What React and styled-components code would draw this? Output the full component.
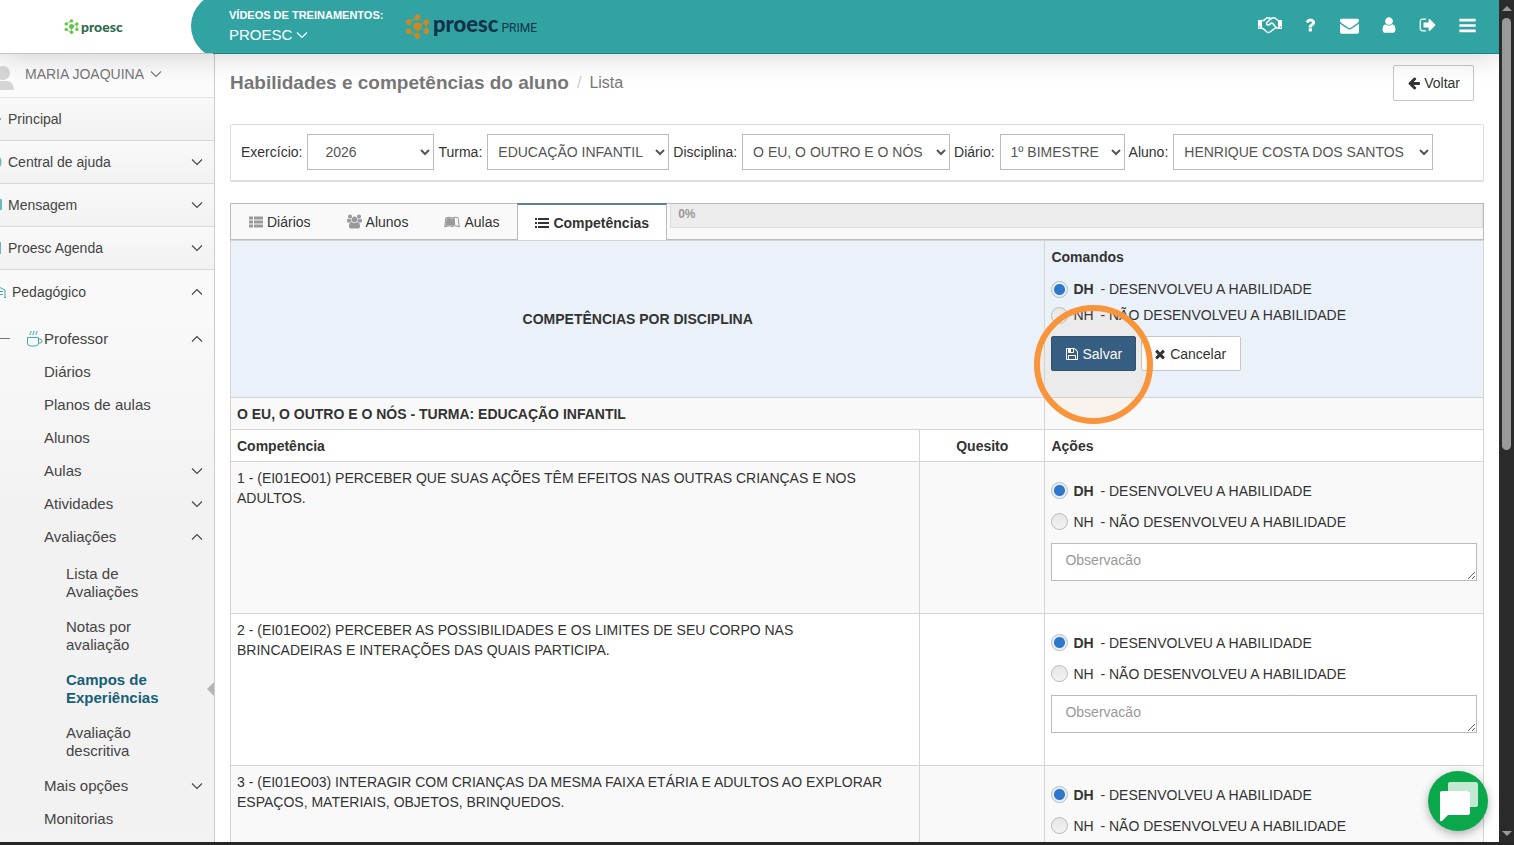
import { useState } from "react";
import styled, { createGlobalStyle } from "styled-components";
import { FaLeanpub } from "react-icons/fa";

const GlobalStyle = createGlobalStyle`
  * {
    box-sizing: border-box;
  }

  body {
    margin: 0;
    overflow: hidden;
    font-family: "Liberation Sans", Arial, sans-serif;
    font-size: 14px;
    line-height: 20px;
    color: #333;
    background: #fff;
  }

  button, select, textarea {
    font-family: inherit;
    font-size: 14px;
  }
`;

const paths = {
  arrowLeft:
    "M1664 896v128q0 53-32.5 90.5t-84.5 37.5h-704l293 294q38 36 38 90t-38 90l-75 76q-37 37-90 37-52 0-91-37l-651-652q-37-37-37-90 0-52 37-91l651-650q38-38 91-38 52 0 90 38l75 74q38 38 38 91t-38 91l-293 293h704q52 0 84.5 37.5t32.5 90.5z",
  times:
    "M1490 1322q0 40-28 68l-136 136q-28 28-68 28t-68-28l-294-294-294 294q-28 28-68 28t-68-28l-136-136q-28-28-28-68t28-68l294-294-294-294q-28-28-28-68t28-68l136-136q28-28 68-28t68 28l294 294 294-294q28-28 68-28t68 28l136 136q28 28 28 68t-28 68l-294 294 294 294q28 28 28 68z",
  envelope:
    "M1792 710v794q0 66-47 113t-113 47h-1472q-66 0-113-47t-47-113v-794q44 49 101 87 362 246 497 345 57 42 92.5 65.5t94.5 48 110 24.5h2q51 0 110-24.5t94.5-48 92.5-65.5q170-123 498-345 57-39 100-87zm0-294q0 79-49 151t-122 123q-376 261-468 325-10 7-42.5 31t-54 38.5-52 32.5-57.5 27-50 9h-2q-23 0-50-9t-57.5-27-52-32.5-54-38.5-42.5-31q-91-64-262-182.5t-205-142.5q-62-42-117-115.5t-55-136.5q0-78 41.5-130t118.5-52h1472q65 0 112.5 47t47.5 113z",
  save: "M512 1536h768v-384h-768v384zm896 0h128v-896q0-14-10-38.5t-20-34.5l-281-281q-10-10-34-20t-39-10v416q0 40-28 68t-68 28h-576q-40 0-68-28t-28-68v-416h-128v1280h128v-416q0-40 28-68t68-28h832q40 0 68 28t28 68v416zm-384-928v-320q0-13-9.5-22.5t-22.5-9.5h-192q-13 0-22.5 9.5t-9.5 22.5v320q0 13 9.5 22.5t22.5 9.5h192q13 0 22.5-9.5t9.5-22.5zm640 32v928q0 40-28 68t-68 28h-1344q-40 0-68-28t-28-68v-1344q0-40 28-68t68-28h928q40 0 88 20t76 48l280 280q28 28 48 76t20 88z",
  signOut:
    "M704 1440q0 4 1 20t.5 26.5-3 23.5-10 19.5-20.5 6.5h-320q-119 0-203.5-84.5t-84.5-203.5v-704q0-119 84.5-203.5t203.5-84.5h320q13 0 22.5 9.5t9.5 22.5q0 4 1 20t.5 26.5-3 23.5-10 19.5-20.5 6.5h-320q-66 0-113 47t-47 113v704q0 66 47 113t113 47h312l11.5 1 11.5 3 8 5.5 7 9 2 13.5zm928-544q0 26-19 45l-544 544q-19 19-45 19t-45-19-19-45v-288h-448q-26 0-45-19t-19-45v-384q0-26 19-45t45-19h448v-288q0-26 19-45t45-19 45 19l544 544q19 19 19 45z",
  user: "M1536 1399q0 109-62.5 187t-150.5 78h-854q-88 0-150.5-78t-62.5-187q0-85 8.5-160.5t31.5-152 58.5-131 94-89 134.5-34.5q131 128 313 128t313-128q76 0 134.5 34.5t94 89 58.5 131 31.5 152 8.5 160.5zm-256-887q0 159-112.5 271.5t-271.5 112.5-271.5-112.5-112.5-271.5 112.5-271.5 271.5-112.5 271.5 112.5 112.5 271.5z",
  users:
    "M593 896q-162 5-265 128h-134q-82 0-138-40.5t-56-118.5q0-353 124-353 6 0 43.5 21t97.5 42.5 119 21.5q67 0 133-23-5 37-5 66 0 139 81 256zm1071 637q0 120-73 189.5t-194 69.5h-874q-121 0-194-69.5t-73-189.5q0-53 3.5-103.5t14-109 26.5-108.5 43-97.5 62-81 85.5-53.5 111.5-20q10 0 43 21.5t73 48 107 48 135 21.5 135-21.5 107-48 73-48 43-21.5q61 0 111.5 20t85.5 53.5 62 81 43 97.5 26.5 108.5 14 109 3.5 103.5zm-1024-1277q0 106-75 181t-181 75-181-75-75-181 75-181 181-75 181 75 75 181zm704 384q0 159-112.5 271.5t-271.5 112.5-271.5-112.5-112.5-271.5 112.5-271.5 271.5-112.5 271.5 112.5 112.5 271.5zm576 225q0 78-56 118.5t-138 40.5h-134q-103-123-265-128 81-117 81-256 0-29-5-66 66 23 133 23 59 0 119-21.5t97.5-42.5 43.5-21q124 0 124 353zm-128-609q0 106-75 181t-181 75-181-75-75-181 75-181 181-75 181 75 75 181z",
  question:
    "M1088 1256v240q0 16-12 28t-28 12h-240q-16 0-28-12t-12-28v-240q0-16 12-28t28-12h240q16 0 28 12t12 28zm316-600q0 54-15.5 101t-35 76.5-55 59.5-57.5 43.5-61 35.5q-41 23-68.5 65t-27.5 67q0 17-12 32.5t-28 15.5h-240q-15 0-25.5-18.5t-10.5-37.5v-45q0-83 65-156.5t143-108.5q59-27 84-56t25-76q0-42-46.5-74t-107.5-32q-65 0-108 29-35 25-107 115-13 16-31 16-12 0-25-8l-164-125q-13-10-15.5-25t5.5-28q160-266 464-266 80 0 161 31t146 83 106 127.5 41 158.5z",
  bars: "M128 256h1536v256h-1536zM128 768h1536v256h-1536zM128 1280h1536v256h-1536z",
  list: "M0 256h256v256h-256zM384 256h1408v256h-1408zM0 768h256v256h-256zM384 768h1408v256h-1408zM0 1280h256v256h-256zM384 1280h1408v256h-1408z",
  thList:
    "M0 192h512v384h-512zM640 192h1152v384h-1152zM0 704h512v384h-512zM640 704h1152v384h-1152zM0 1216h512v384h-512zM640 1216h1152v384h-1152z",
};

const Icon = ({ name, size = 14, box = 1792 }) => (
  <svg
    width={size}
    height={size}
    viewBox={`0 0 ${box} 1792`}
    fill="currentColor"
    aria-hidden="true"
  >
    <path d={paths[name]} />
  </svg>
);

const Handshake = () => (
  <svg width="26" height="18" viewBox="0 0 26 18" fill="none" aria-hidden="true">
    <path
      fill="currentColor"
      fillRule="evenodd"
      d="M1 4h4v9H1zM2 10.500v1.200h1.200v-1.200zM21 4h4v9h-4zM22.800 10.500v1.200H24v-1.200z"
    />
    <path
      d="M5 4.500h2L9.500 2H13l1 .8L15.500 2H18l3 2.500M5 12.500h1l4 3.500q1.500 1 3 0l6-4.500 2 1M14 2.800 9.800 6.500q-.8 2.500 1.500 2.500 1.500 0 2.700-2l1.500.2 3.800 4.600"
      stroke="currentColor"
      strokeWidth="1.5"
      strokeLinejoin="round"
    />
  </svg>
);

const Chevron = ({ up }) => (
  <svg width="12" height="8" viewBox="0 0 12 8" fill="none" aria-hidden="true">
    <path
      d={up ? "M1 6.5 6 1.5 11 6.5" : "M1 1.5 6 6.5 11 1.5"}
      stroke="currentColor"
      strokeWidth="1.1"
    />
  </svg>
);

const Mark = ({ size, color }) => (
  <svg width={size} height={size} viewBox="0 0 24 24" aria-hidden="true">
    <path
      d="M12 3 3.500 7.800M20.500 7.800 12 12M20.500 7.800v8.800M3.500 16.600l8.500 4.600M12 12v7"
      stroke={color}
      strokeWidth="1.2"
    />
    <g fill={color}>
      <circle cx="12" cy="3" r="2.7" />
      <circle cx="3.5" cy="7.8" r="2.7" />
      <circle cx="20.5" cy="7.8" r="2.7" />
      <circle cx="3.5" cy="16.6" r="2.7" />
      <circle cx="20.5" cy="16.6" r="2.7" />
      <circle cx="12" cy="21.2" r="2.7" />
      <circle cx="12" cy="12" r="4" />
    </g>
  </svg>
);

const CupIcon = () => (
  <svg width="18" height="18" viewBox="0 0 18 18" fill="none" stroke="#45a9ae" aria-hidden="true">
    <path d="M1.500 7.500h11v5.500q0 3-3 3h-5q-3 0-3-3zM12.500 9H14q2 0 2 2t-2 2h-1.500M4.500 1q1.500 1 0 2t0 2M7.500 1q1.500 1 0 2t0 2M10.500 1q1.500 1 0 2t0 2" />
  </svg>
);

const menu = [
  { label: "Principal", d: "M0 7h1v2H0z" },
  { label: "Central de ajuda", d: "M0 3q3 5 0 10z", chevron: true },
  { label: "Mensagem", d: "M0 2h1q1 0 1 1v9q0 1-1 1H0z", chevron: true },
  { label: "Proesc Agenda", d: "M0 2h1v12H0z", chevron: true },
];

const professorTop = [
  { label: "Diários" },
  { label: "Planos de aulas" },
  { label: "Alunos" },
  { label: "Aulas", chevron: "down" },
  { label: "Atividades", chevron: "down" },
  { label: "Avaliações", chevron: "up" },
];

const avaliacoes = [
  "Lista de Avaliações",
  "Notas por avaliação",
  "Campos de Experiências",
  "Avaliação descritiva",
];

const professorBottom = [
  { label: "Mais opções", chevron: "down" },
  { label: "Monitorias" },
];

const filters = [
  { id: "exercicio", label: "Exercício:", value: "2026", width: 127, indent: 13 },
  { id: "turma", label: "Turma:", value: "EDUCAÇÃO INFANTIL", width: 182 },
  { id: "disciplina", label: "Disciplina:", value: "O EU, O OUTRO E O NÓS", width: 208 },
  { id: "diario", label: "Diário:", value: "1º BIMESTRE", width: 125 },
  { id: "aluno", label: "Aluno:", value: "HENRIQUE COSTA DOS SANTOS", width: 260 },
];

const competencias = [
  "1 - (EI01EO01) PERCEBER QUE SUAS AÇÕES TÊM EFEITOS NAS OUTRAS CRIANÇAS E NOS ADULTOS.",
  "2 - (EI01EO02) PERCEBER AS POSSIBILIDADES E OS LIMITES DE SEU CORPO NAS BRINCADEIRAS E INTERAÇÕES DAS QUAIS PARTICIPA.",
  "3 - (EI01EO03) INTERAGIR COM CRIANÇAS DA MESMA FAIXA ETÁRIA E ADULTOS AO EXPLORAR ESPAÇOS, MATERIAIS, OBJETOS, BRINQUEDOS.",
];

const options = [
  { code: "DH", text: "- DESENVOLVEU A HABILIDADE" },
  { code: "NH", text: "- NÃO DESENVOLVEU A HABILIDADE" },
];

const RadioGroup = ({ name, compact }) => {
  const [value, setValue] = useState("DH");

  return (
    <Options $compact={compact}>
      {options.map((o) => (
        <Option key={o.code} $compact={compact}>
          <Radio
            type="radio"
            name={name}
            checked={value === o.code}
            onChange={() => setValue(o.code)}
          />
          <Code $on={value === o.code}>{o.code}</Code>
          {o.text}
        </Option>
      ))}
    </Options>
  );
};

const SubLinks = ({ items }) =>
  items.map((item) => (
    <SubLink href="#" key={item.label}>
      {item.label}
      {item.chevron && <Chevron up={item.chevron === "up"} />}
    </SubLink>
  ));

const App = () => {
  return (
    <>
      <GlobalStyle />
      <Shell>
        <Page>
          <Header>
            <Brand href="#">
              <Mark size={15} color="#5fc846" />
              <BrandName>proesc</BrandName>
            </Brand>
            <TopBar>
              <Training>
                <strong>VÍDEOS DE TREINAMENTOS:</strong>
                <TrainingButton type="button">
                  PROESC <Chevron />
                </TrainingButton>
              </Training>
              <Prime>
                <Mark size={25} color="#c48b28" />
                <PrimeName>proesc</PrimeName>
                <PrimeTag>PRIME</PrimeTag>
              </Prime>
              <Actions>
                <Action href="#" aria-label="Parcerias">
                  <Handshake />
                </Action>
                <Action href="#" aria-label="Ajuda">
                  <Icon name="question" size={18} />
                </Action>
                <Action href="#" aria-label="Mensagens">
                  <Icon name="envelope" size={19} />
                </Action>
                <Action href="#" aria-label="Perfil">
                  <Icon name="user" size={18} />
                </Action>
                <Action href="#" aria-label="Sair">
                  <Icon name="signOut" size={18} />
                </Action>
                <Action href="#" aria-label="Menu">
                  <Icon name="bars" size={19} />
                </Action>
              </Actions>
            </TopBar>
          </Header>

          <Body>
            <Sidebar>
              <User type="button">
                <svg width="14" height="26" viewBox="0 0 14 26" fill="#d5d5d5" aria-hidden="true">
                  <circle cx="3" cy="9" r="7" />
                  <path d="M0 17h7q7 1 7 9H0z" />
                </svg>
                <span>MARIA JOAQUINA</span>
                <Chevron />
              </User>
              {menu.map((item) => (
                <MenuLink href="#" key={item.label}>
                  <svg width="2" height="16" viewBox="0 0 2 16" fill="#69b8bb" aria-hidden="true">
                    <path d={item.d} />
                  </svg>
                  <span>{item.label}</span>
                  {item.chevron && <Chevron />}
                </MenuLink>
              ))}
              <MenuLink href="#" $open>
                <svg width="6" height="14" viewBox="0 0 6 14" fill="none" stroke="#45a9ae" aria-hidden="true">
                  <path d="M0 2.500 5 5v7M0 6.500h3M0 9.500h3M4 12.500h2" />
                </svg>
                <span>Pedagógico</span>
                <Chevron up />
              </MenuLink>
              <SubMenu>
                <Professor href="#">
                  <Dash />
                  <CupIcon />
                  <span>Professor</span>
                  <Chevron up />
                </Professor>
                <SubLinks items={professorTop} />
                <Nested>
                  {avaliacoes.map((label) => {
                    const active = label === "Campos de Experiências";
                    return (
                      <NestedLink href="#" key={label} $active={active}>
                        <span>{label}</span>
                        {active && <Pointer />}
                      </NestedLink>
                    );
                  })}
                </Nested>
                <SubLinks items={professorBottom} />
              </SubMenu>
            </Sidebar>

            <Main>
              <Heading>
                <Title>Habilidades e competências do aluno</Title>
                <Slash>/</Slash>
                <Crumb>Lista</Crumb>
                <BackButton type="button">
                  <Icon name="arrowLeft" />
                  Voltar
                </BackButton>
              </Heading>

              <Filters>
                {filters.map((f) => (
                  <Filter key={f.id}>
                    <label htmlFor={f.id}>{f.label}</label>
                    <Select id={f.id} $width={f.width} $indent={f.indent}>
                      <option>{f.value}</option>
                    </Select>
                  </Filter>
                ))}
              </Filters>

              <Tabs>
                <Tab type="button">
                  <Icon name="thList" />
                  Diários
                </Tab>
                <Tab type="button">
                  <Icon name="users" size={15} box={1920} />
                  Alunos
                </Tab>
                <Tab type="button">
                  <FaLeanpub size={16} />
                  Aulas
                </Tab>
                <Tab type="button" $active>
                  <Icon name="list" />
                  Competências
                </Tab>
                <Progress>0%</Progress>
              </Tabs>

              <Table>
                <colgroup>
                  <col width="55%" />
                  <col width="10%" />
                  <col width="35%" />
                </colgroup>
                <tbody>
                  <tr>
                    <BlueCell colSpan={2}>
                      <TableTitle>COMPETÊNCIAS POR DISCIPLINA</TableTitle>
                    </BlueCell>
                    <BlueCell>
                      <strong>Comandos</strong>
                      <RadioGroup name="comandos" compact />
                      <Buttons>
                        <SaveButton type="button">
                          <Icon name="save" />
                          Salvar
                          <Ring />
                        </SaveButton>
                        <CancelButton type="button">
                          <Icon name="times" />
                          Cancelar
                        </CancelButton>
                      </Buttons>
                    </BlueCell>
                  </tr>
                  <Row $striped>
                    <HeadCell colSpan={2}>
                      O EU, O OUTRO E O NÓS - TURMA: EDUCAÇÃO INFANTIL
                    </HeadCell>
                    <Cell />
                  </Row>
                  <Row>
                    <HeadCell>Competência</HeadCell>
                    <HeadCell $center>Quesito</HeadCell>
                    <HeadCell>Ações</HeadCell>
                  </Row>
                  {competencias.map((text, i) => (
                    <Row key={text} $striped={i % 2 === 0}>
                      <TextCell>{text}</TextCell>
                      <Cell />
                      <Cell>
                        <RadioGroup name={`competencia-${i}`} />
                        <Note rows={1} placeholder="Observacão" aria-label="Observacão" />
                      </Cell>
                    </Row>
                  ))}
                </tbody>
              </Table>
            </Main>
          </Body>
        </Page>

        <ScrollBar>
          <ScrollArrow $up />
          <Thumb />
          <ScrollArrow />
        </ScrollBar>
      </Shell>

      <ChatButton type="button" aria-label="Chat">
        <svg width="40" height="42" viewBox="-2 -2 40 42" fill="#fff" aria-hidden="true">
          <path opacity=".75" d="M10 0h26q2 0 2 2v21q0 2-2 2h-6V11q0-2-2-2H8V2q0-2 2-2z" />
          <path d="M2 9h26q2 0 2 2v20q0 2-2 2H8l-6 6q-2 1-2-1V11q0-2 2-2z" />
        </svg>
      </ChatButton>
    </>
  );
};

export default App;

const Shell = styled.div`
  display: flex;
  height: 100vh;
  border-bottom: 3px solid #262626;
`;

const Page = styled.div`
  flex: 1;
  min-width: 0;
  display: flex;
  flex-direction: column;
  overflow: hidden;
`;

const Header = styled.header`
  position: relative;
  z-index: 1;
  flex: none;
  display: flex;
  height: 54px;
  background: #fff;
  border-bottom: 1px solid;
  border-image: linear-gradient(90deg, #c4c4c4 214px, #23807f 214px) 1;
  box-shadow: 0 0 30px rgba(0, 0, 0, 0.2);
  clip-path: inset(0 0 -40px 0);
`;

const Brand = styled.a`
  display: flex;
  align-items: center;
  gap: 2px;
  width: 191px;
  padding-left: 64px;
  text-decoration: none;
`;

const BrandName = styled.span`
  font-family: Lato, sans-serif;
  font-size: 14px;
  font-weight: 900;
  line-height: 16px;
  color: #2e6b4f;
`;

const TopBar = styled.div`
  flex: 1;
  display: flex;
  align-items: center;
  height: 66px;
  margin-top: -7px;
  clip-path: inset(7px 0 6px 0);
  padding: 0 18px 0 38px;
  color: #fff;
  background: #32a3a3;
  border-radius: 33px 0 0 33px;
`;

const Training = styled.div`
  width: 176px;
  padding-bottom: 2px;
  font-size: 11px;
`;

const TrainingButton = styled.button`
  display: flex;
  align-items: center;
  gap: 4px;
  padding: 0;
  border: 0;
  background: none;
  color: #fff;
  font-size: 15px;
  line-height: 20px;
`;

const Prime = styled.div`
  display: flex;
  align-items: baseline;
  color: #10324a;
  font-family: Lato, sans-serif;

  svg {
    align-self: center;
    margin-right: 3px;
  }
`;

const PrimeName = styled.span`
  font-size: 22px;
  font-weight: 900;
`;

const PrimeTag = styled.span`
  margin-left: 3px;
  font-family: Roboto, sans-serif;
  font-size: 12px;
`;

const Actions = styled.nav`
  display: flex;
  justify-content: space-between;
  width: 224px;
  margin-left: auto;
  padding-bottom: 2px;
`;

const Action = styled.a`
  display: flex;
  align-items: center;
  justify-content: center;
  width: 26px;
  height: 26px;
  color: #fff;
`;

const Body = styled.div`
  flex: 1;
  min-height: 0;
  display: flex;
`;

const Sidebar = styled.aside`
  flex: none;
  width: 215px;
  background: #f3f3f3;
  border-right: 1px solid #ccc;
  overflow: hidden;
`;

const User = styled.button`
  display: flex;
  align-items: center;
  width: 100%;
  height: 44px;
  padding: 0 0 4px;
  border: 0;
  border-bottom: 1px solid #e2e2e2;
  background: #fbfbfb;
  color: #777;

  svg:first-child {
    align-self: flex-end;
    margin-bottom: 3px;
  }

  span {
    margin: 0 6px 0 11px;
  }
`;

const MenuLink = styled.a`
  display: flex;
  align-items: center;
  height: 43px;
  padding-right: 11px;
  border-bottom: ${({ $open }) => ($open ? "0" : "1px solid #d9d9d9")};
  background: ${({ $open }) =>
    $open ? "#f9f9f9" : "linear-gradient(#f9f9f9, #f2f2f2)"};
  color: #444;
  text-decoration: none;

  span {
    flex: 1;
    margin-left: 6px;
  }
`;

const SubMenu = styled.nav`
  padding-top: 9px;
  background: linear-gradient(#f9f9f9, #f2f2f2 200px);
  color: #444;
`;

const Professor = styled.a`
  display: flex;
  align-items: center;
  height: 33px;
  padding-right: 11px;
  color: inherit;
  font-size: 15px;
  text-decoration: none;

  span {
    flex: 1;
  }
`;

const Dash = styled.i`
  width: 10px;
  height: 1px;
  margin-right: 16px;
  background: #777;
`;

const SubLink = styled.a`
  display: flex;
  align-items: center;
  justify-content: space-between;
  height: 33px;
  padding: 0 11px 0 44px;
  color: inherit;
  font-size: 15px;
  text-decoration: none;
`;

const Nested = styled.div`
  padding: 3px 0 1px;
`;

const NestedLink = styled.a`
  display: flex;
  align-items: center;
  justify-content: space-between;
  height: 53px;
  padding-left: 66px;
  color: ${({ $active }) => ($active ? "#165f77" : "inherit")};
  font-size: 15px;
  font-weight: ${({ $active }) => ($active ? "bold" : "normal")};
  line-height: 18px;
  text-decoration: none;

  span {
    width: 100px;
  }
`;

const Pointer = styled.i`
  border: 7px solid transparent;
  border-right-color: #b5b5b5;
  border-left: 0;
`;

const Main = styled.main`
  flex: 1;
  min-width: 0;
  padding: 11px 15px 0;
  overflow: hidden;
`;

const Heading = styled.div`
  display: flex;
  align-items: center;
  height: 36px;
  padding-right: 10px;
  color: #777;
`;

const Title = styled.h1`
  margin: 0;
  font-size: 19px;
  line-height: 22px;
`;

const Slash = styled.span`
  margin: 0 8px;
  color: #ccc;
  font-size: 16px;
`;

const Crumb = styled.span`
  font-size: 16px;
`;

const Button = styled.button`
  display: flex;
  align-items: center;
  gap: 3px;
  height: 35px;
  padding: 0 13px;
  border: 1px solid #c6c6c6;
  border-radius: 2px;
  background: #fff;
  color: #333;
`;

const BackButton = styled(Button)`
  height: 36px;
  margin-left: auto;
`;

const SaveButton = styled(Button)`
  position: relative;
  border-color: #274e70;
  background: #2a5b88;
  color: #fff;
`;

const CancelButton = styled(Button)`
  padding: 0 14px 0 11px;
`;

const Ring = styled.span`
  position: absolute;
  z-index: 2;
  top: -32px;
  left: 50%;
  width: 119px;
  height: 119px;
  margin-left: -60px;
  border: 6px solid #f9943b;
  border-radius: 50%;
  background: rgba(249, 148, 59, 0.06);
  pointer-events: none;
`;

const Filters = styled.form`
  display: flex;
  gap: 4px;
  margin-top: 23px;
  padding: 9px 10px 10px;
  border: 1px solid #ddd;
  border-bottom-width: 2px;
  border-radius: 2px;
`;

const Filter = styled.div`
  display: flex;
  align-items: center;
  gap: 5px;
`;

const Select = styled.select`
  width: ${({ $width }) => $width}px;
  height: 36px;
  padding: 0 0 0 ${({ $indent }) => $indent || 6}px;
  border: 1px solid #bbb;
  border-radius: 0;
  background: #fff;
  color: #555;
`;

const Tabs = styled.div`
  display: flex;
  height: 37px;
  margin-top: 21px;
  border: 1px solid #bbb;
  background: #f9f9f9;
`;

const Tab = styled.button`
  display: flex;
  align-items: center;
  gap: 4px;
  margin: ${({ $active }) => ($active ? "-1px 3px -1px 0" : "0")};
  padding: 0 ${({ $active }) => ($active ? "17px" : "18px")};
  border: ${({ $active }) => ($active ? "1px solid #bbb" : "0")};
  border-top: ${({ $active }) => ($active ? "2px solid #5d7f99" : "0")};
  border-bottom: 0;
  background: ${({ $active }) => ($active ? "#fff" : "none")};
  color: #333;
  font-weight: ${({ $active }) => ($active ? "bold" : "normal")};

  svg {
    color: ${({ $active }) => ($active ? "#333" : "#999")};
  }
`;

const Progress = styled.div`
  flex: 1;
  height: 24px;
  padding-left: 7px;
  border: 1px solid #ddd;
  border-top: 0;
  background: #ededed;
  color: #999;
  font-size: 12px;
  font-weight: bold;
`;

const Table = styled.table`
  width: 100%;
  table-layout: fixed;
  border-collapse: collapse;
  border: 1px solid #ccc;
`;

const Row = styled.tr`
  background: ${({ $striped }) => ($striped ? "#f9f9f9" : "#fff")};
`;

const Cell = styled.td`
  padding: 6px;
  border: 1px solid #d4d4d4;
  vertical-align: top;
`;

const TextCell = styled(Cell)`
  padding-right: 24px;
`;

const BlueCell = styled(Cell)`
  height: 157px;
  background: #eaf1f8;
  vertical-align: middle;

  & + & {
    vertical-align: top;
  }
`;

const TableTitle = styled.div`
  font-weight: bold;
  text-align: center;
`;

const HeadCell = styled.th`
  padding: 6px 6px 5px;
  border: 1px solid #d4d4d4;
  text-align: ${({ $center }) => ($center ? "center" : "left")};
`;

const Options = styled.div`
  padding: ${({ $compact }) => ($compact ? "9px 0 8px" : "7px 0 6px")};
`;

const Option = styled.label`
  display: flex;
  align-items: center;
  height: ${({ $compact }) => ($compact ? "26px" : "31px")};
`;

const Radio = styled.input`
  appearance: none;
  width: 17px;
  height: 17px;
  margin: 0 5px 0 0;
  border: 1px solid #bbb;
  border-radius: 50%;
  background: linear-gradient(#e6e6e6, #f2f2f2);

  &:checked {
    border-color: #b4bcc4;
    background: radial-gradient(circle, #2e78cc 5px, #e8eff7 6px);
  }
`;

const Code = styled.span`
  width: 27px;
  font-weight: ${({ $on }) => ($on ? "bold" : "normal")};
`;

const Buttons = styled.div`
  display: flex;
  gap: 5px;
`;

const Note = styled.textarea`
  display: block;
  width: 100%;
  height: 38px;
  margin: 0 0 26px;
  padding: 6px 13px;
  border: 1px solid #bbb;
  border-radius: 0;
  line-height: 20px;
  resize: vertical;

  &::placeholder {
    color: #999;
  }
`;

const ScrollBar = styled.div`
  flex: none;
  display: flex;
  flex-direction: column;
  align-items: center;
  width: 15px;
  padding: 6px 0;
  background: #2b2b2b;
`;

const ScrollArrow = styled.i`
  border: 5px solid transparent;
  border-top: ${({ $up }) => ($up ? "0" : "5px solid #9a9a9a")};
  border-bottom: ${({ $up }) => ($up ? "5px solid #9a9a9a" : "0")};
`;

const Thumb = styled.div`
  width: 9px;
  height: 52%;
  margin: 7px 0 auto;
  border-radius: 5px;
  background: #9a9a9a;
`;

const ChatButton = styled.button`
  position: fixed;
  z-index: 3;
  right: 26px;
  bottom: 14px;
  display: flex;
  align-items: center;
  justify-content: center;
  width: 60px;
  height: 60px;
  padding: 0;
  border: 0;
  border-radius: 50%;
  background: #0aa84a;
  box-shadow: 0 3px 10px rgba(0, 0, 0, 0.3);
`;
